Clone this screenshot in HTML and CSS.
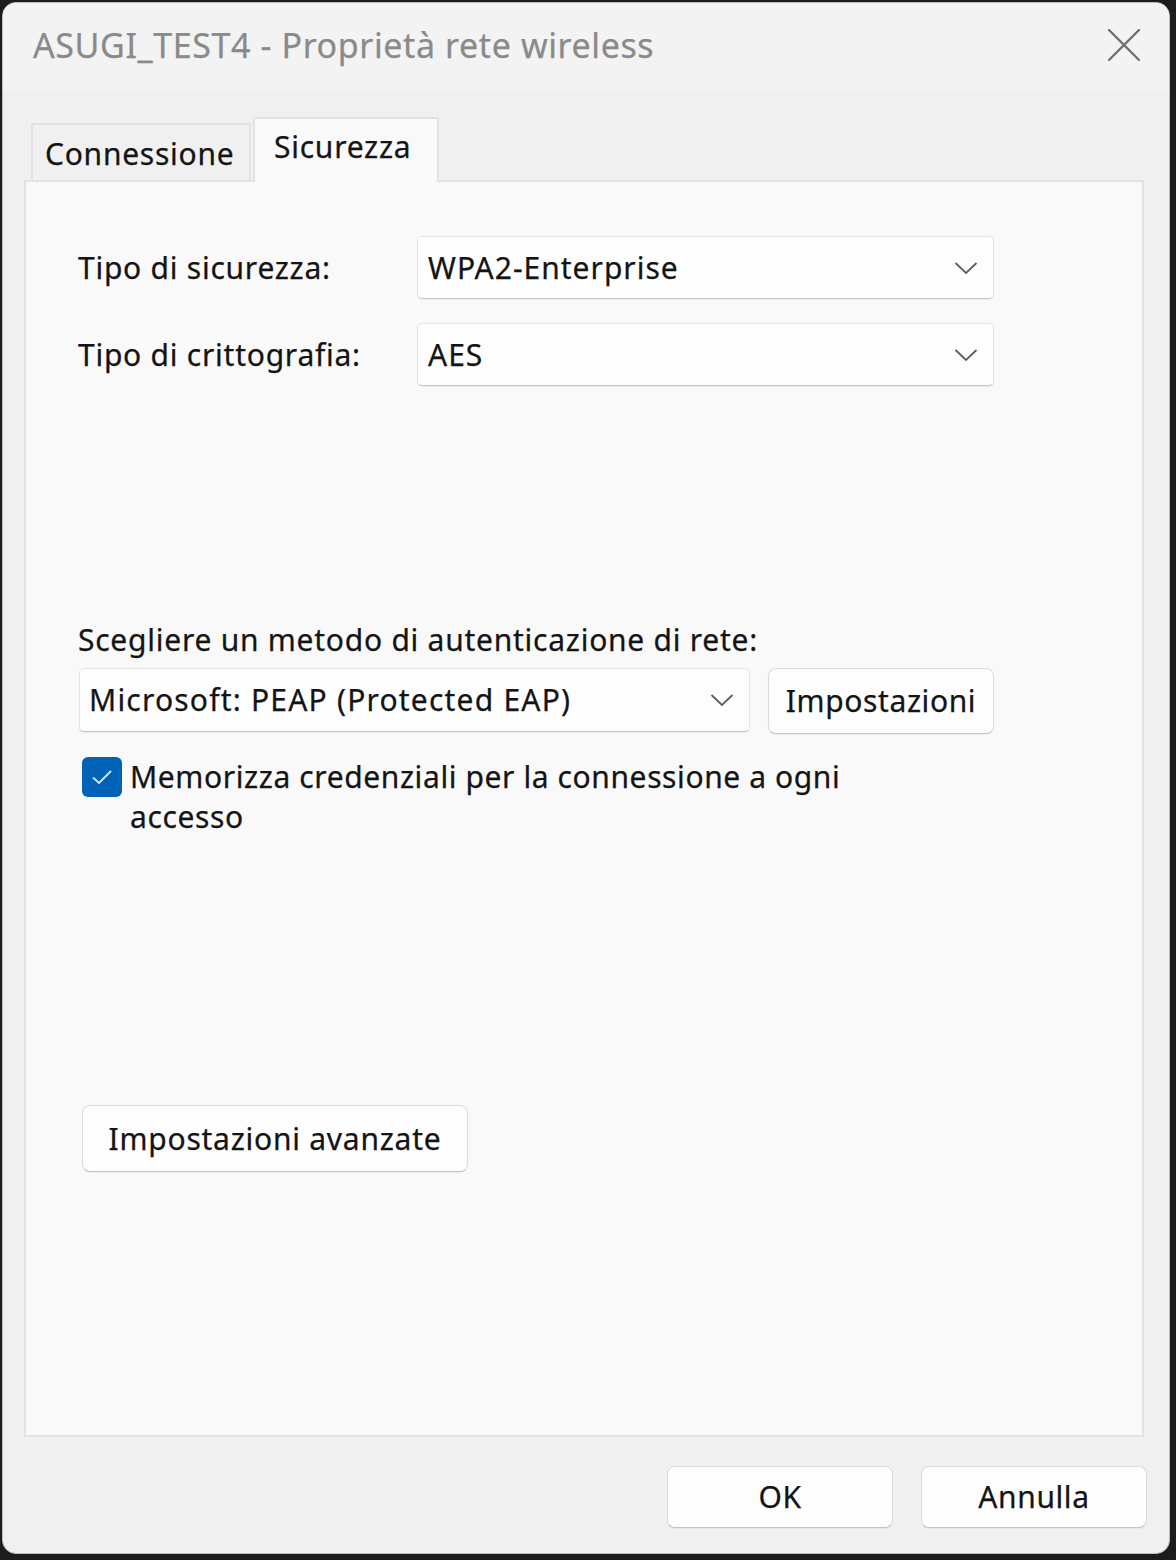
FILE: index.html
```html
<!DOCTYPE html>
<html lang="it">
<head>
<meta charset="utf-8">
<title>ASUGI_TEST4 - Proprietà rete wireless</title>
<link rel="stylesheet" href="styles.css">
</head>
<body>
<div class="window">
  <div class="titlebar">
    <span class="title">ASUGI_TEST4 - Proprietà rete wireless</span>
    <svg class="close" width="32" height="32" viewBox="0 0 32 32"><path d="M1 1 L31 31 M31 1 L1 31" stroke="#6f6f6f" stroke-width="2.4" fill="none" stroke-linecap="round"/></svg>
  </div>
  <div class="tabs">
    <div class="tab tab-conn">Connessione</div>
    <div class="tab tab-active">Sicurezza</div>
  </div>
  <div class="panel">
    <div class="grid">
      <span class="label">Tipo di sicurezza:</span>
      <div class="combo"><span>WPA2-Enterprise</span><svg class="chev" width="24" height="14" viewBox="0 0 24 14"><path d="M1.5 2 L12 12 L22.5 2" stroke="#5e5e5e" stroke-width="1.8" fill="none"/></svg></div>
      <span class="label">Tipo di crittografia:</span>
      <div class="combo"><span>AES</span><svg class="chev" width="24" height="14" viewBox="0 0 24 14"><path d="M1.5 2 L12 12 L22.5 2" stroke="#5e5e5e" stroke-width="1.8" fill="none"/></svg></div>
    </div>
    <div class="auth-label">Scegliere un metodo di autenticazione di rete:</div>
    <div class="auth-row">
      <div class="combo combo-auth"><span>Microsoft: PEAP (Protected EAP)</span><svg class="chev" width="24" height="14" viewBox="0 0 24 14"><path d="M1.5 2 L12 12 L22.5 2" stroke="#5e5e5e" stroke-width="1.8" fill="none"/></svg></div>
      <button class="btn btn-settings">Impostazioni</button>
    </div>
    <div class="check-row">
      <span class="checkbox"><svg width="22" height="16" viewBox="0 0 22 16"><path d="M2 8.5 L8 14 L20 2" stroke="#d6e6f6" stroke-width="1.8" fill="none"/></svg></span>
      <span class="check-text">Memorizza credenziali per la connessione a ogni<br>accesso</span>
    </div>
    <button class="btn btn-adv">Impostazioni avanzate</button>
  </div>
  <div class="footer">
    <button class="btn btn-foot">OK</button>
    <button class="btn btn-foot">Annulla</button>
  </div>
</div>
</body>
</html>
```

FILE: styles.css
```css
* { box-sizing: border-box; }
html, body { margin: 0; padding: 0; }
body {
  background: #1c1c1c;
  width: 1176px;
  height: 1560px;
  padding: 2px 6px 6px 2px;
  font-family: "Noto Sans", "Open Sans", sans-serif;
  color: #141414;
  -webkit-text-stroke: 0.25px currentColor;
}
.window {
  width: 1168px;
  height: 1552px;
  background: #f0f0f0;
  border: 1px solid #bdbdbd;
  border-radius: 14px;
  display: flex;
  flex-direction: column;
  overflow: hidden;
}
.titlebar {
  height: 88px;
  flex: none;
  background: #f3f3f3;
  display: flex;
  align-items: center;
  justify-content: space-between;
  padding: 0 29px 4px 30px;
}
.title {
  font-size: 34px;
  color: #8a8a8a;
  letter-spacing: 0.6px;
}
.close { display: block; }
.tabs {
  display: flex;
  align-items: flex-end;
  gap: 2px;
  padding: 23px 0 0 28px;
  height: 89px;
  flex: none;
}
.tab {
  font-size: 30px;
  letter-spacing: 0.75px;
  line-height: 40px;
  border: 2px solid #e2e2e2;
  border-bottom: none;
}
.tab-conn {
  width: 220px;
  height: 57px;
  background: #f0f0f0;
  padding: 9px 0 0 12px;
}
.tab-active {
  width: 186px;
  height: 65px;
  background: #f9f9f9;
  padding: 8px 0 0 19px;
  margin-bottom: -2px;
  position: relative;
  z-index: 1;
}
.panel {
  margin: 0 25px 0 21px;
  height: 1257px;
  flex: none;
  background: #f9f9f9;
  border: 2px solid #e2e2e2;
  padding: 54px 0 0 52px;
  display: flex;
  flex-direction: column;
  align-items: flex-start;
  font-size: 30px;
  letter-spacing: 0.75px;
}
.grid {
  display: grid;
  grid-template-columns: 339px 577px;
  row-gap: 24px;
  align-items: center;
}
.label { line-height: 40px; }
.combo {
  height: 63px;
  background: #fdfdfd;
  border: 1px solid #e3e3e3;
  border-bottom-color: #c4c4c4;
  border-radius: 5px;
  box-shadow: 0 1px 1px rgba(0,0,0,0.06);
  display: flex;
  align-items: center;
  justify-content: space-between;
  padding: 0 15px 0 10px;
  line-height: 40px;
  letter-spacing: 1px;
}
.chev { display: block; }
.auth-label {
  margin-top: 234px;
  line-height: 40px;
}
.auth-row {
  display: flex;
  align-items: flex-start;
  gap: 18px;
  margin-top: 8px;
  margin-left: 1px;
}
.combo-auth {
  width: 671px;
  height: 64px;
  padding-left: 9px;
  letter-spacing: 1.2px;
}
.btn {
  font-family: inherit;
  font-size: 30px;
  letter-spacing: 0.6px;
  color: #141414;
  background: #fdfdfd;
  border: 1px solid #dcdcdc;
  border-bottom-color: #c2c2c2;
  border-radius: 8px;
  box-shadow: 0 1px 1px rgba(0,0,0,0.05);
  line-height: 40px;
  padding: 0;
  -webkit-text-stroke: 0.25px currentColor;
}
.btn-settings {
  width: 226px;
  height: 66px;
}
.check-row {
  display: flex;
  align-items: flex-start;
  gap: 8px;
  margin-top: 23px;
  margin-left: 4px;
}
.checkbox {
  width: 40px;
  height: 40px;
  flex: none;
  background: #0063b8;
  border-radius: 6px;
  display: flex;
  align-items: center;
  justify-content: center;
}
.checkbox svg { display: block; }
.check-text { line-height: 40px; letter-spacing: 0.6px; }
.btn-adv {
  margin-top: 268px;
  margin-left: 4px;
  width: 386px;
  height: 67px;
  letter-spacing: 0.75px;
}
.footer {
  display: flex;
  justify-content: flex-end;
  gap: 28px;
  padding: 29px 22px 0 0;
}
.btn-foot {
  width: 226px;
  height: 62px;
}
```
